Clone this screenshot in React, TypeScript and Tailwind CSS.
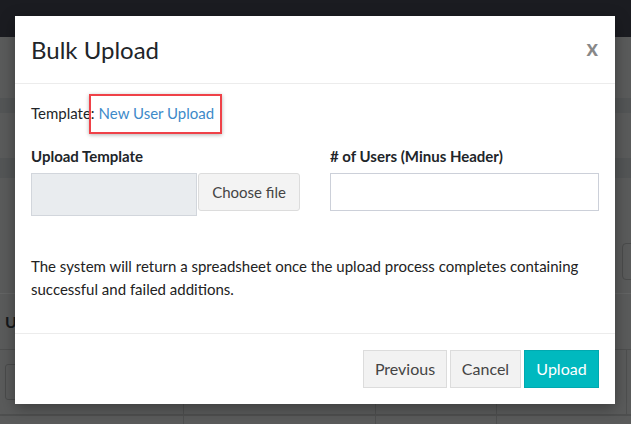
export default function App() {
  return (
    <div className="relative h-[424px] w-[631px] overflow-hidden bg-[#5a5b5b] font-['Lato','Noto_Sans',sans-serif] text-[#212529]">
      {/* page behind the backdrop */}
      <div className="h-[37px] bg-[#1b1c21]" />
      <div className="mt-[61px] h-[15px] bg-[#535556]" />
      <div className="mt-[45px] h-[20px] bg-[#535556]" />
      <div className="mt-[115px] border-t border-[#636464]">
        <div className="flex h-[55px] items-center pl-[5px] text-[16px] font-bold text-[#16181b]">U</div>
        <div className="flex h-[65px] border-t border-[#4e4f4f]">
          <div className="w-[184px] border-r border-[#4e4f4f] pl-[5px] pt-[14px]">
            <div className="h-[36px] w-[40px] rounded-[3px] border border-[#4a4b4b]" />
          </div>
          <div className="w-[192px] border-r border-[#4e4f4f]" />
          <div className="w-[121px] border-r border-[#4e4f4f]" />
          <div className="w-[130px] border-r border-[#4e4f4f]" />
        </div>
        <div className="flex h-[20px] border-t-2 border-[#4e4f4f]">
          <div className="w-[184px] border-r border-[#4e4f4f]" />
          <div className="w-[192px] border-r border-[#4e4f4f]" />
          <div className="w-[121px] border-r border-[#4e4f4f]" />
        </div>
      </div>
      <div className="absolute left-[622px] top-[243px] h-[37px] w-[20px] rounded-[4px] border border-[#4a4b4b]" />

      {/* modal */}
      <div className="absolute left-[15px] top-[16px] flex h-[388px] w-[600px] flex-col bg-white shadow-[0_4px_14px_rgba(0,0,0,0.35)]">
        <div className="flex h-[68px] items-center justify-between border-b border-[#ececec] px-4">
          <h4 className="text-[24px] leading-none text-[#212529]">Bulk Upload</h4>
          <span className="mb-[4px] mr-[1px] text-[22px] font-bold leading-none text-[#888]">x</span>
        </div>

        <div className="flex-1 px-4">
          <div className="mt-[18px] text-[15px] leading-[22px]">
            Template:
            <span className="relative ml-[4px] text-[#3d8ac9]">
              New User Upload
              <span className="absolute left-[-10px] right-[-8px] top-[-10px] bottom-[-12px] border-2 border-[#ef4148] shadow-[0_1px_4px_rgba(0,0,0,0.3)]" />
            </span>
          </div>

          <div className="mt-[21px] grid grid-cols-2 gap-[30px]">
            <div>
              <div className="text-[15px] font-bold leading-[22px]">Upload Template</div>
              <div className="mt-[6px] flex items-start">
                <div className="h-[43px] w-[166px] border border-[#d2d6dc] bg-[#e9ecef]" />
                <div className="ml-[1px] flex h-[38px] flex-1 items-center justify-center rounded-[3px] border border-[#dcdcdc] bg-[#f3f3f3] text-[15px] text-[#444]">
                  Choose file
                </div>
              </div>
            </div>
            <div>
              <div className="text-[15px] font-bold leading-[22px]">
                # of Users (Minus Header)
              </div>
              <div className="mt-[6px] h-[38px] border border-[#ccd0d9] bg-white" />
            </div>
          </div>

          <p className="mt-[39px] text-[15px] leading-[23px] text-[#222]">
            The system will return a spreadsheet once the upload process completes containing
            <br />
            successful and failed additions.
          </p>
        </div>

        <div className="flex h-[71px] items-center justify-end gap-[3px] border-t border-[#ececec] px-4">
          <button className="h-[38px] w-[84px] border border-[#dcdcdc] bg-[#f2f2f2] text-[16px] text-[#444]">
            Previous
          </button>
          <button className="h-[38px] w-[71px] border border-[#dcdcdc] bg-[#f2f2f2] text-[16px] text-[#444]">
            Cancel
          </button>
          <button className="h-[38px] w-[75px] border border-[#00a9b0] bg-[#00b9bf] text-[16px] text-white">
            Upload
          </button>
        </div>
      </div>
    </div>
  );
}
